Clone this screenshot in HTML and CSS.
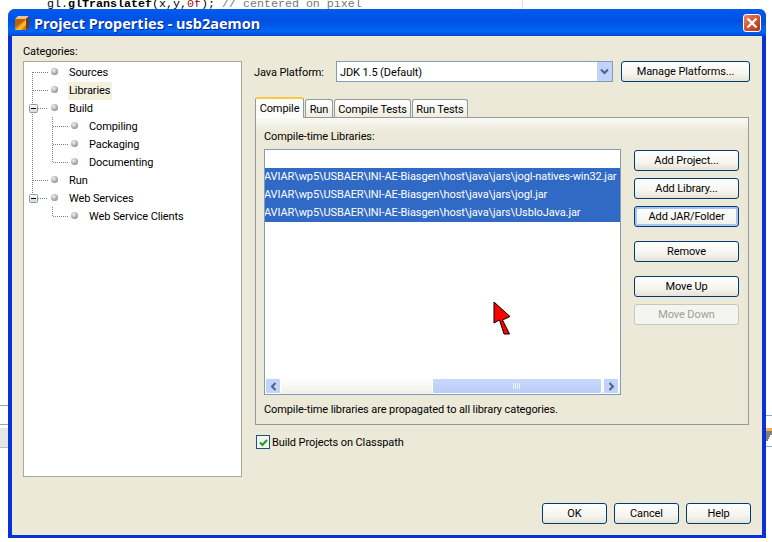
FILE: index.html
```html
<!DOCTYPE html>
<html>
<head>
    <title>Project Properties - usb2aemon</title>
    <link rel="stylesheet" href="styles.css">
</head>
<body>
    <div class="desktop">
        <div class="codeLine">gl.<b>glTranslatef</b>(x,y,<span class="codeNum">0f</span>); <span class="codeComment">// centered on pixel</span></div>
        <div class="editorMargin"></div>
        <div class="leftField"></div>
        <div class="leftTab"></div>
        <div class="rightLine"></div>
        <div class="rightStrip">
            <svg width="6" height="10" viewBox="0 0 6 10"><path d="M0 1h6M0 3h6M0 5h4M0 7h3M0 9h2" stroke="#000" stroke-width="1.2"/></svg>
        </div>

        <div class="dialog">
            <div class="titleBar">
                <svg class="titleIcon" width="16" height="16" viewBox="0 0 16 16">
                    <polygon points="1,4 4,1 15,1 12,4" fill="#e8c48c"/>
                    <polygon points="12,4 15,1 15,12 12,15" fill="#6e3c10"/>
                    <polygon points="1,4 12,4 12,15 1,15" fill="#d97a10"/>
                    <polygon points="1,15 12,5 12,10 7,15" fill="#f9b52c"/>
                    <polygon points="1,4 12,4 1,12" fill="#b8600e"/>
                </svg>
                <span class="titleText">Project Properties - usb2aemon</span>
                <div class="closeBtn">
                    <svg width="12" height="12" viewBox="0 0 12 12"><path d="M1.5 1.5l9 9M10.5 1.5l-9 9" stroke="#fff" stroke-width="2.4"/></svg>
                </div>
            </div>

            <div class="dialogBody">
                <div class="leftCol">
                    <div class="catLabel">Categories:</div>
                    <div class="tree">
                        <svg class="treeLines" width="80" height="170" viewBox="0 0 80 170">
                            <defs>
                                <radialGradient id="ball" cx="0.4" cy="0.35" r="0.7">
                                    <stop offset="0" stop-color="#f2f2f2"/>
                                    <stop offset="1" stop-color="#8a8a8a"/>
                                </radialGradient>
                                <linearGradient id="expander" x1="0" y1="0" x2="0" y2="1">
                                    <stop offset="0" stop-color="#fff"/>
                                    <stop offset="1" stop-color="#dcd8c4"/>
                                </linearGradient>
                            </defs>
                            <g stroke="#808080" stroke-dasharray="1 1" fill="none">
                                <path d="M8.5 10V136M9 10.5H24M9 28.5H24M14 46.5H24M9 118.5H24M14 136.5H24"/>
                                <path d="M28.5 55V100M29 64.5H44M29 82.5H44M29 100.5H44M28.5 145V154M29 154.5H44"/>
                            </g>
                            <g fill="url(#expander)" stroke="#7f9db9">
                                <rect x="5.5" y="42.5" width="8" height="8" rx="1"/>
                                <rect x="5.5" y="132.5" width="8" height="8" rx="1"/>
                            </g>
                            <path d="M7 46.5h5M7 136.5h5" stroke="#000"/>
                            <g fill="url(#ball)">
                                <circle cx="30.5" cy="9.5" r="3.5"/>
                                <circle cx="30.5" cy="27.5" r="3.5"/>
                                <circle cx="30.5" cy="45.5" r="3.5"/>
                                <circle cx="50.5" cy="63.5" r="3.5"/>
                                <circle cx="50.5" cy="81.5" r="3.5"/>
                                <circle cx="50.5" cy="99.5" r="3.5"/>
                                <circle cx="30.5" cy="117.5" r="3.5"/>
                                <circle cx="30.5" cy="135.5" r="3.5"/>
                                <circle cx="50.5" cy="153.5" r="3.5"/>
                            </g>
                        </svg>
                        <div class="treeRow"><span>Sources</span></div>
                        <div class="treeRow"><span class="treeSel">Libraries</span></div>
                        <div class="treeRow"><span>Build</span></div>
                        <div class="treeRow sub"><span>Compiling</span></div>
                        <div class="treeRow sub"><span>Packaging</span></div>
                        <div class="treeRow sub"><span>Documenting</span></div>
                        <div class="treeRow"><span>Run</span></div>
                        <div class="treeRow"><span>Web Services</span></div>
                        <div class="treeRow sub"><span>Web Service Clients</span></div>
                    </div>
                </div>

                <div class="rightCol">
                    <div class="platformRow">
                        <span class="platformLabel">Java Platform:</span>
                        <div class="combo">
                            <span class="comboText">JDK 1.5 (Default)</span>
                            <div class="comboArrow">
                                <svg width="9" height="7" viewBox="0 0 9 7"><path d="M1 1.5l3.5 3.5 3.5-3.5" fill="none" stroke="#4d6185" stroke-width="2"/></svg>
                            </div>
                        </div>
                        <button class="btn manageBtn">Manage Platforms...</button>
                    </div>

                    <div class="tabs">
                        <div class="tab active">Compile</div>
                        <div class="tab w-run">Run</div>
                        <div class="tab w-ct">Compile Tests</div>
                        <div class="tab w-rt">Run Tests</div>
                    </div>
                    <div class="tabPanel">
                        <div class="panelLabel">Compile-time Libraries:</div>
                        <div class="libArea">
                            <div class="libList">
                                <div class="libRows">
                                    <div class="libRow"></div>
                                    <div class="libRow selected">AVIAR\wp5\USBAER\INI-AE-Biasgen\host\java\jars\jogl-natives-win32.jar</div>
                                    <div class="libRow selected">AVIAR\wp5\USBAER\INI-AE-Biasgen\host\java\jars\jogl.jar</div>
                                    <div class="libRow selected">AVIAR\wp5\USBAER\INI-AE-Biasgen\host\java\jars\UsbIoJava.jar</div>
                                </div>
                                <div class="hScroll">
                                    <div class="scrollBtn">
                                        <svg width="7" height="9" viewBox="0 0 7 9"><path d="M5.5 1L2 4.5 5.5 8" fill="none" stroke="#4d6185" stroke-width="2"/></svg>
                                    </div>
                                    <div class="scrollTrack">
                                        <div class="scrollThumb">
                                            <svg width="8" height="6" viewBox="0 0 8 6"><path d="M.5 0v6M2.5 0v6M4.5 0v6M6.5 0v6" stroke="#eef2ff"/></svg>
                                        </div>
                                    </div>
                                    <div class="scrollBtn">
                                        <svg width="7" height="9" viewBox="0 0 7 9"><path d="M1.5 1L5 4.5 1.5 8" fill="none" stroke="#4d6185" stroke-width="2"/></svg>
                                    </div>
                                </div>
                            </div>
                            <div class="libButtons">
                                <button class="btn">Add Project...</button>
                                <button class="btn">Add Library...</button>
                                <button class="btn focused">Add JAR/Folder</button>
                                <button class="btn gapTop">Remove</button>
                                <button class="btn gapTop">Move Up</button>
                                <button class="btn disabled">Move Down</button>
                            </div>
                        </div>
                        <div class="panelHint">Compile-time libraries are propagated to all library categories.</div>
                    </div>

                    <div class="checkRow">
                        <div class="checkBox">
                            <svg width="11" height="11" viewBox="0 0 11 11"><path d="M2 5.5l2.5 2.5 4.5-5" fill="none" stroke="#21a121" stroke-width="2.2"/></svg>
                        </div>
                        <span>Build Projects on Classpath</span>
                    </div>

                    <div class="footer">
                        <button class="btn footBtn">OK</button>
                        <button class="btn footBtn">Cancel</button>
                        <button class="btn footBtn">Help</button>
                    </div>
                </div>
            </div>
        </div>

        <svg class="cursor" width="20" height="36" viewBox="0 0 20 36">
            <polygon points="1,1 17,15.5 9.5,19 16.5,33 11,33 6.5,19 1,22" fill="#f00" stroke="#000" stroke-width="1"/>
        </svg>
    </div>
</body>
</html>
```

FILE: styles.css
```css
html, body {
    margin: 0;
    background: #fff;
}
.desktop {
    position: relative;
    width: 772px;
    height: 542px;
    overflow: hidden;
    background: #fff;
    font-family: Roboto, sans-serif;
    font-size: 11px;
    letter-spacing: -0.1px;
    color: #000;
}

/* editor behind the dialog */
.codeLine {
    position: absolute;
    left: 47px;
    top: -3px;
    font-family: "Liberation Mono", monospace;
    font-size: 11.67px;
    letter-spacing: 0;
    line-height: 14px;
    white-space: pre;
}
.codeNum { color: #8a1010; }
.codeComment { color: #777; }
.editorMargin {
    position: absolute;
    left: 522px;
    top: 0;
    width: 1px;
    height: 9px;
    background: #f6d8d8;
}
.leftField {
    position: absolute;
    left: -3px;
    top: 405px;
    width: 11px;
    height: 18px;
    border: 1px solid #8fa8c4;
    background: #fff;
}
.leftTab {
    position: absolute;
    left: 0;
    top: 428px;
    width: 8px;
    height: 19px;
    background: #e6e6e6;
    border-bottom: 1px solid #b5bfc9;
}
.rightLine {
    position: absolute;
    left: 766px;
    top: 415px;
    width: 6px;
    height: 1px;
    background: #8fa8c4;
}
.rightStrip {
    position: absolute;
    left: 766px;
    top: 428px;
    width: 6px;
    height: 19px;
    border-top: 3px solid #f5b04a;
    border-bottom: 1px solid #8fa8c4;
    box-sizing: border-box;
}
.rightStrip svg { display: block; }

/* dialog window */
.dialog {
    position: absolute;
    left: 8px;
    top: 9px;
    width: 758px;
    height: 529px;
    box-sizing: border-box;
    display: flex;
    flex-direction: column;
    border-radius: 7px 7px 0 0;
    background: #0831d9;
    padding: 0 4px 3px 4px;
}
.titleBar {
    height: 27px;
    margin: 0 -4px;
    padding: 0 6px;
    box-sizing: border-box;
    display: flex;
    align-items: center;
    border-radius: 7px 7px 0 0;
    background: linear-gradient(#0a5fe6 0%, #0058ee 12%, #0050e0 45%, #0066f5 80%, #005ae8 92%, #0a3fc8 100%);
}
.titleIcon { flex: none; }
.titleText {
    margin-left: 4px;
    font-family: "Noto Sans", sans-serif;
    font-weight: bold;
    font-size: 14.5px;
    letter-spacing: 0;
    color: #fff;
    text-shadow: 1px 1px 0 #0a1f8f;
    flex: 1;
    white-space: nowrap;
}
.closeBtn {
    width: 18px;
    height: 18px;
    box-sizing: border-box;
    margin-right: -1px;
    border: 1px solid #fff;
    border-radius: 3px;
    background: linear-gradient(135deg, #e88a6c, #d8512e 50%, #b5300f);
    display: flex;
    align-items: center;
    justify-content: center;
}
.closeBtn svg { display: block; }
.dialogBody {
    flex: 1;
    min-height: 0;
    display: flex;
    gap: 12px;
    padding: 0 11px;
    background: #ece9d8;
}
.leftCol {
    width: 219px;
    flex: none;
}
.catLabel {
    height: 25px;
    line-height: 32px;
}
.tree {
    position: relative;
    height: 416px;
    box-sizing: border-box;
    padding-top: 2px;
    background: #fff;
    border: 1px solid #aca899;
}
.treeLines {
    position: absolute;
    left: 0;
    top: 0;
}
.treeRow {
    height: 18px;
    line-height: 18px;
    padding-left: 44px;
    white-space: nowrap;
}
.treeRow.sub { padding-left: 64px; }
.treeRow span {
    display: inline-block;
    padding: 0 1px;
}
.treeRow .treeSel {
    background: #f4f0de;
    width: 44px;
    box-sizing: border-box;
}

.rightCol {
    flex: 1;
    min-width: 0;
    display: flex;
    flex-direction: column;
    padding-top: 25px;
    padding-bottom: 11px;
    box-sizing: border-box;
}
.platformRow {
    display: flex;
    align-items: center;
    height: 21px;
}
.platformLabel { width: 82px; flex: none; padding-top: 1px; }
.combo {
    width: 277px;
    height: 21px;
    box-sizing: border-box;
    border: 1px solid #7f9db9;
    background: #fff;
    display: flex;
    align-items: center;
    flex: none;
}
.comboText { flex: 1; padding: 1px 0 0 3px; }
.comboArrow {
    width: 15px;
    height: 19px;
    background: #c1d2fb;
    display: flex;
    align-items: center;
    justify-content: center;
}
.btn {
    display: block;
    box-sizing: border-box;
    height: 21px;
    padding: 0;
    font-family: Roboto, sans-serif;
    font-size: 11px;
    letter-spacing: -0.1px;
    color: #000;
    border: 1px solid #003c74;
    border-radius: 3px;
    background: linear-gradient(#fff 0%, #f6f5ef 60%, #e6e2d6 100%);
}
.manageBtn { width: 129px; margin-left: 8px; flex: none; }
.btn.focused {
    box-shadow: inset 0 0 0 2px #a8c4f0;
    background: linear-gradient(#fff, #f0f0ea);
}
.btn.disabled {
    border-color: #c9c7ba;
    background: #f4f4f0;
    color: #a1a192;
}

.tabs {
    display: flex;
    margin-top: 14px;
    margin-left: 1px;
    height: 21px;
    align-items: flex-end;
    gap: 1px;
    position: relative;
    z-index: 1;
}
.tab {
    height: 18px;
    line-height: 19px;
    box-sizing: border-box;
    text-align: center;
    border: 1px solid #919b9c;
    border-bottom: none;
    border-radius: 3px 3px 0 0;
    background: linear-gradient(#fff, #f0eee2);
}
.tab.active {
    width: 49px;
    height: 21px;
    line-height: 20px;
    background: #fcfcfa;
    border-top: 2px solid #ffc73c;
    margin-bottom: -1px;
}
.w-run { width: 28px; }
.w-ct { width: 77px; }
.w-rt { width: 56px; }
.tabPanel {
    width: 494px;
    height: 308px;
    margin-left: 1px;
    box-sizing: border-box;
    border: 1px solid #919b9c;
    background: linear-gradient(#fafaf6 0, #ece9d8 14px);
    padding: 0 8px;
}
.panelLabel {
    height: 31px;
    line-height: 38px;
}
.libArea {
    display: flex;
    gap: 13px;
}
.libList {
    width: 357px;
    height: 246px;
    box-sizing: border-box;
    flex: none;
    border: 1px solid #7f9db9;
    background: #fff;
    display: flex;
    flex-direction: column;
}
.libRows {
    flex: 1;
    overflow: hidden;
}
.libRow {
    height: 18px;
    line-height: 18px;
    white-space: nowrap;
    text-indent: -1px;
}
.libRow.selected {
    background: #316ac5;
    color: #fff;
}
.hScroll {
    height: 16px;
    padding-right: 1px;
    display: flex;
    background: linear-gradient(#fff, #f1efe6);
}
.scrollBtn {
    width: 16px;
    flex: none;
    box-sizing: border-box;
    border: 1px solid #fff;
    border-radius: 2px;
    background: #c1d2fb;
    display: flex;
    align-items: center;
    justify-content: center;
}
.scrollTrack {
    flex: 1;
    display: flex;
    justify-content: flex-end;
    padding-right: 1px;
}
.scrollThumb {
    width: 170px;
    box-sizing: border-box;
    border: 1px solid #fff;
    border-radius: 2px;
    background: linear-gradient(#c9d8fb, #b9cdf8);
    display: flex;
    align-items: center;
    justify-content: center;
}
.libButtons {
    width: 105px;
    padding-top: 1px;
    display: flex;
    flex-direction: column;
    gap: 7px;
    flex: none;
}
.libButtons .btn { width: 105px; }
.libButtons .gapTop { margin-top: 7px; }
.panelHint {
    height: 28px;
    line-height: 29px;
}
.checkRow {
    display: flex;
    align-items: center;
    gap: 2px;
    height: 14px;
    margin-top: 10px;
    margin-left: 2px;
}
.checkBox {
    width: 14px;
    height: 14px;
    box-sizing: border-box;
    border: 1px solid #1c5180;
    background: #f6f6f0;
    display: flex;
    align-items: center;
    justify-content: center;
}
.footer {
    margin-top: auto;
    display: flex;
    justify-content: flex-end;
    gap: 7px;
}
.footBtn { width: 65px; }

.cursor {
    position: absolute;
    left: 492.5px;
    top: 300.5px;
}
```
